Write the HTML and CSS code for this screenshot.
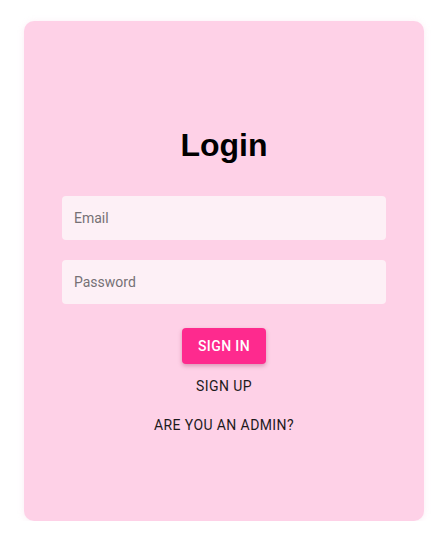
FILE: index.html
```html
<!DOCTYPE html>
<html lang="en">
<head>
<meta charset="utf-8">
<title>Login</title>
<link rel="stylesheet" href="styles.css">
</head>
<body>
<main class="page">
  <section class="card">
    <h1 class="title">Login</h1>
    <form class="form">
      <input class="field" type="email" placeholder="Email">
      <input class="field" type="password" placeholder="Password">
      <button class="btn-primary" type="button">SIGN IN</button>
    </form>
    <a class="link link-signup" href="#">SIGN UP</a>
    <a class="link link-admin" href="#">ARE YOU AN ADMIN?</a>
  </section>
</main>
</body>
</html>
```

FILE: styles.css
```css
html, body {
  margin: 0;
  padding: 0;
  background: #ffffff;
}

.page {
  padding: 21px 22px 0 24px;
}

.card {
  box-sizing: border-box;
  width: 400px;
  height: 500px;
  background: #fed1e7;
  border-radius: 10px;
  box-shadow: 0 1px 6px rgba(240, 180, 210, 0.25);
  padding: 106px 38px 0;
  display: flex;
  flex-direction: column;
  align-items: center;
}

.title {
  margin: 0;
  font-family: "Liberation Sans", Arial, sans-serif;
  font-weight: 700;
  font-size: 32px;
  line-height: 37px;
  color: #000;
}

.form {
  width: 100%;
  margin-top: 32px;
  display: flex;
  flex-direction: column;
  align-items: center;
}

.field {
  box-sizing: border-box;
  width: 100%;
  height: 44px;
  border: none;
  outline: none;
  border-radius: 4px;
  background: #fdf0f6;
  padding: 0 12px;
  font-family: Roboto, sans-serif;
  font-size: 14px;
  color: #333;
}

.field + .field {
  margin-top: 20px;
}

.field::placeholder {
  color: #757075;
}

.btn-primary {
  margin-top: 24px;
  width: 84px;
  height: 36px;
  border: none;
  border-radius: 4px;
  background: #fe2a8e;
  color: #fff;
  font-family: Roboto, sans-serif;
  font-weight: 500;
  font-size: 14px;
  letter-spacing: 0.4px;
  box-shadow: 0 2px 4px rgba(150, 40, 90, 0.35);
  cursor: pointer;
}

.link {
  display: block;
  font-family: Roboto, sans-serif;
  font-weight: 400;
  font-size: 14px;
  line-height: 20px;
  letter-spacing: 0.4px;
  color: #1d1a1c;
  text-decoration: none;
}

.link-signup {
  margin-top: 12px;
}

.link-admin {
  margin-top: 19px;
}
```
